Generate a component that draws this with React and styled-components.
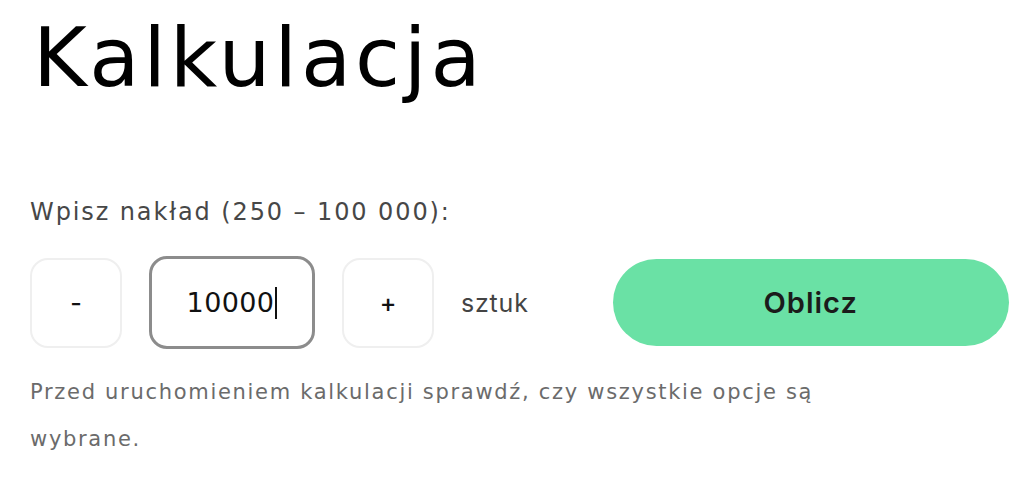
import React from "react";
import styled, { createGlobalStyle } from "styled-components";

const GlobalStyle = createGlobalStyle`
  body {
    margin: 0;
    background: #fff;
    font-family: "DejaVu Sans", "Noto Sans", sans-serif;
  }
`;

const Page = styled.div`
  padding: 0 30px;
  width: 1030px;
  box-sizing: border-box;
`;

const Title = styled.h1`
  margin: 0;
  padding: 17px 0 0 3px;
  font-size: 82px;
  font-weight: 400;
  line-height: 1;
  letter-spacing: 3.8px;
  color: #000;
`;

const Label = styled.div`
  margin-top: 99px;
  font-size: 24px;
  line-height: 28px;
  letter-spacing: 1.9px;
  color: #474747;
`;

const Row = styled.div`
  display: flex;
  align-items: center;
  gap: 27px;
  margin-top: 30px;

  & > * {
    flex-shrink: 0;
  }
`;

const StepButton = styled.button`
  width: 92px;
  height: 90px;
  border: 2px solid #efefef;
  border-radius: 18px;
  background: #fff;
  font-family: "Inter", sans-serif;
  font-size: 25px;
  font-weight: 500;
  color: #111;
  cursor: pointer;
`;

const Amount = styled.div`
  width: 166px;
  height: 93px;
  box-sizing: border-box;
  border: 3px solid #8c8c8c;
  border-radius: 18px;
  display: flex;
  align-items: center;
  justify-content: center;
  font-size: 27px;
  letter-spacing: 0.4px;
  color: #111;
`;

const Caret = styled.span`
  display: inline-block;
  width: 2px;
  height: 32px;
  background: #111;
  margin-left: 1px;
`;

const Unit = styled.span`
  font-family: "Inter", sans-serif;
  font-size: 25px;
  letter-spacing: 0.8px;
  color: #444;
`;

const Submit = styled.button`
  margin-left: 57px;
  width: 396px;
  height: 87px;
  border: none;
  border-radius: 44px;
  background: #6ae1a5;
  font-family: "Inter", sans-serif;
  font-size: 29px;
  font-weight: 600;
  letter-spacing: 1px;
  color: #1b1b1b;
  cursor: pointer;
`;

const Hint = styled.p`
  margin: 20px 0 0;
  max-width: 820px;
  font-size: 21px;
  line-height: 47px;
  letter-spacing: 1.7px;
  color: #6b6b6b;
`;

export default function App() {
  return (
    <>
      <GlobalStyle />
      <Page>
        <Title>Kalkulacja</Title>
        <Label>Wpisz nakład (250 – 100 000):</Label>
        <Row>
          <StepButton>-</StepButton>
          <Amount>
            10000
            <Caret />
          </Amount>
          <StepButton>+</StepButton>
          <Unit>sztuk</Unit>
          <Submit>Oblicz</Submit>
        </Row>
        <Hint>
          Przed uruchomieniem kalkulacji sprawdź, czy wszystkie opcje są
          wybrane.
        </Hint>
      </Page>
    </>
  );
}
